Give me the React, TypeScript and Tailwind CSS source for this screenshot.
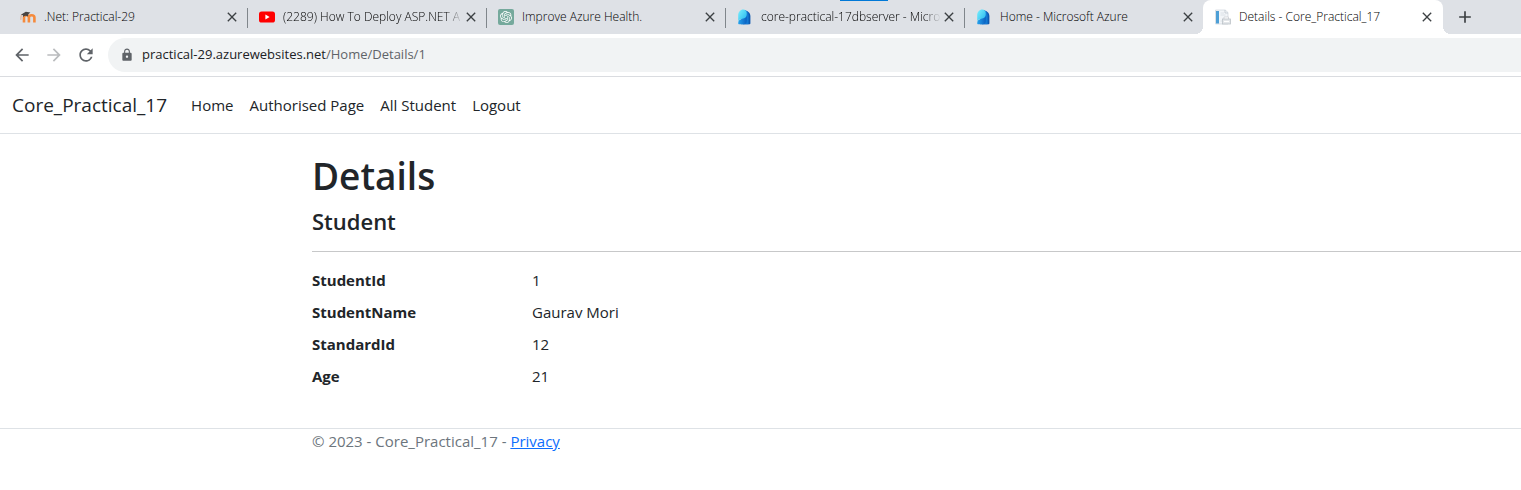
import type { ReactNode } from 'react';
import { SiOpenai } from 'react-icons/si';
import { MdArrowBack, MdArrowForward, MdRefresh, MdLock, MdClose, MdAdd } from 'react-icons/md';

function MoodleIcon() {
  return (
    <svg viewBox="0 0 16 16" className="size-4">
      <path d="M4 13.400V8.600C4 7 5 6.200 6.400 6.200S8.900 7 8.900 8.600v4.800M8.900 8.600c0-1.600 1.200-2.400 2.700-2.400s2.800.8 2.800 2.400v4.800" fill="none" stroke="#f58a3c" strokeWidth="2.600" />
      <path d="M.8 5.800 5.800 2.800 10.400 3.400 8.300 5.200 7.900 7.400C6.200 6.400 4.400 6.800 3.200 8L3 6.200Z" fill="#494543" />
      <path d="M1.400 5.800C.9 7.300.9 8.700.9 10.800" fill="none" stroke="#e0a27d" strokeWidth=".8" />
    </svg>
  );
}

function YoutubeIcon() {
  return (
    <svg viewBox="0 0 16 16" className="size-4">
      <rect x="0" y="2.4" width="16" height="11.2" rx="2.6" fill="#ff0000" />
      <path d="M6.4 5.6v4.8L10.6 8Z" fill="#fff" />
    </svg>
  );
}

function OpenAiIcon() {
  return (
    <span className="flex size-4 items-center justify-center rounded-xs bg-[#75a99c] text-white">
      <SiOpenai className="size-3" />
    </span>
  );
}

function AzureIcon() {
  return (
    <svg viewBox="0 0 16 16" className="size-4">
      <defs>
        <linearGradient id="azureFront" x1="0" y1="0" x2="1" y2="1">
          <stop offset="0" stopColor="#7cf0fd" />
          <stop offset="1" stopColor="#21b4ee" />
        </linearGradient>
        <linearGradient id="azureBase" x1="0" y1="0" x2="1" y2="0">
          <stop offset="0" stopColor="#27a5ee" />
          <stop offset="1" stopColor="#0b5fc0" />
        </linearGradient>
      </defs>
      <path d="M6 1.200C10 .8 13.400 3.400 13.400 7v7.300c0 .6-.4 1-1 1H6Z" fill="#0d58b0" />
      <path d="M5 1c4-.4 6.600 2 6.600 5.400v8.900H4Z" fill="#1379d3" />
      <path d="M1.200 14.300c0-2.600 1.400-3.900 4-4.300 2.600-.4 4.200-1.600 4.500-4v6c0 2-1 3.300-3 3.300H2.200c-.6 0-1-.4-1-1Z" fill="url(#azureBase)" />
      <path d="M1.200 12.600V6.400C1.200 3 3.400.6 6.200.6c2.200 0 3.500 1.300 3.500 3.200v2c0 2.400-1.700 3.700-4.300 4-2.400.3-3.800 1.100-4.200 2.800Z" fill="url(#azureFront)" />
    </svg>
  );
}

function PageIcon() {
  return (
    <svg viewBox="0 0 16 16" className="size-4">
      <path d="M.5 1h9.700L13 3.500V15H.5Z" fill="#f2f5f8" stroke="#cfd6dc" strokeWidth=".7" />
      <rect x="1" y="2" width="3" height="12.500" fill="#4d9fd6" />
      <path d="M5.500 4h3.500M5.500 6h5M5.500 12h1.500" stroke="#d5dce2" strokeWidth=".8" />
      <path d="M10 1v3h3" fill="none" stroke="#b9c2ca" strokeWidth=".7" />
      <path d="M9 8h4.500v2.500H9Z" fill="#fff" stroke="#c8cdd2" strokeWidth=".7" />
      <rect x="7.500" y="10" width="8" height="5" fill="#e3e6e9" stroke="#bcc2c8" strokeWidth=".8" />
      <path d="M9 12.500h5" stroke="#fff" strokeWidth="1" />
    </svg>
  );
}

type Tab = { title: string; icon: ReactNode; active?: boolean; faded?: boolean };

const tabs: Tab[] = [
  { title: '.Net: Practical-29', icon: <MoodleIcon /> },
  { title: '(2289) How To Deploy ASP.NET A', icon: <YoutubeIcon />, faded: true },
  { title: 'Improve Azure Health.', icon: <OpenAiIcon /> },
  { title: 'core-practical-17dbserver - Micro', icon: <AzureIcon />, faded: true },
  { title: 'Home - Microsoft Azure', icon: <AzureIcon /> },
  { title: 'Details - Core_Practical_17', icon: <PageIcon />, active: true },
];

const navLinks = ['Home', 'Authorised Page', 'All Student', 'Logout'];

const fields = [
  ['StudentId', '1'],
  ['StudentName', 'Gaurav Mori'],
  ['StandardId', '12'],
  ['Age', '21'],
];

function BrowserTab({ title, icon, active, faded, divided }: Tab & { divided: boolean }) {
  return (
    <div
      className={`relative flex h-full min-w-0 items-center pl-3 ${active ? 'w-60 rounded-t-lg bg-white pr-2' : 'w-[239px] pr-[7px]'}`}
    >
      {divided && <span className="absolute left-0 top-2 h-5 w-px bg-[#80868b]" />}
      {active && (
        <>
          <span className="absolute bottom-0 right-full size-2 bg-[radial-gradient(circle_at_0_0,#dee1e6_8px,#fff_8px)]" />
          <span className="absolute bottom-0 left-full size-2 bg-[radial-gradient(circle_at_100%_0,#dee1e6_8px,#fff_8px)]" />
        </>
      )}
      <span className="shrink-0">{icon}</span>
      <span
        className={`ml-2 min-w-0 flex-1 overflow-hidden whitespace-nowrap text-xs font-light text-black ${faded ? 'mask-r-from-90% mask-r-to-100%' : ''}`}
      >
        {title}
      </span>
      <button type="button" aria-label={`Close ${title}`} className="shrink-0 text-[#3c4043]">
        <MdClose className="size-4" />
      </button>
    </div>
  );
}

export default function App() {
  return (
    <div className="min-h-screen overflow-hidden bg-white font-['Open_Sans','Noto_Sans',sans-serif] text-[#212529]">
      <div className="relative flex h-[34px] bg-[#dee1e6] pl-2">
        <span className="absolute left-[840px] top-0 h-px w-12 bg-[#0078d7]" />
        {tabs.map((tab, i) => (
          <BrowserTab key={tab.title} {...tab} divided={i > 0 && !tab.active} />
        ))}
        <button type="button" aria-label="New tab" className="ml-3 text-[#3c4043]">
          <MdAdd className="size-5" />
        </button>
      </div>

      <div className="flex items-center border-b border-[#dadce0] py-1 pl-3">
        <button type="button" aria-label="Back" className="mr-3 text-[#5f6368]">
          <MdArrowBack className="size-5" />
        </button>
        <button type="button" aria-label="Forward" className="mr-3 text-[#babcbe]">
          <MdArrowForward className="size-5" />
        </button>
        <button type="button" aria-label="Reload" className="mr-3 text-[#5f6368]">
          <MdRefresh className="size-5" />
        </button>
        <div className="flex h-[34px] flex-1 items-center rounded-l-full bg-[#f1f3f4] pl-3 text-[13px]">
          <MdLock className="mr-2 size-3.5 text-[#5f6368]" />
          <span className="text-[#202124]">practical-29.azurewebsites.net</span>
          <span className="text-[#5f6368]">/Home/Details/1</span>
        </div>
      </div>

      <nav className="flex items-center border-b border-[#dee2e6] px-3 py-2 text-[15px] leading-6">
        <a href="#" className="mr-4 py-1 text-[19px] leading-8">Core_Practical_17</a>
        {navLinks.map((label) => (
          <a key={label} href="#" className="p-2">{label}</a>
        ))}
      </nav>

      <main className="pb-4 pl-[312px] pt-[17px]">
        <h1 className="mb-1.5 text-[37px] font-semibold leading-[50px]">Details</h1>
        <h4 className="text-[22px] font-semibold leading-[28px]">Student</h4>
        <hr className="my-4 border-[#c7c8c9]" />
        <dl className="mb-4 grid grid-cols-[220px_1fr] gap-y-2 pb-2 text-[15px] leading-6">
          {fields.map(([label, value]) => (
            <div key={label} className="contents">
              <dt className="font-bold">{label}</dt>
              <dd>{value}</dd>
            </div>
          ))}
        </dl>
      </main>

      <footer className="border-t border-[#dee2e6] pl-[312px] text-[15px] leading-6 text-[#6c757d]">
        © 2023 - Core_Practical_17 -{' '}
        <a href="#" className="text-[#0d6efd] underline">Privacy</a>
      </footer>
    </div>
  );
}
